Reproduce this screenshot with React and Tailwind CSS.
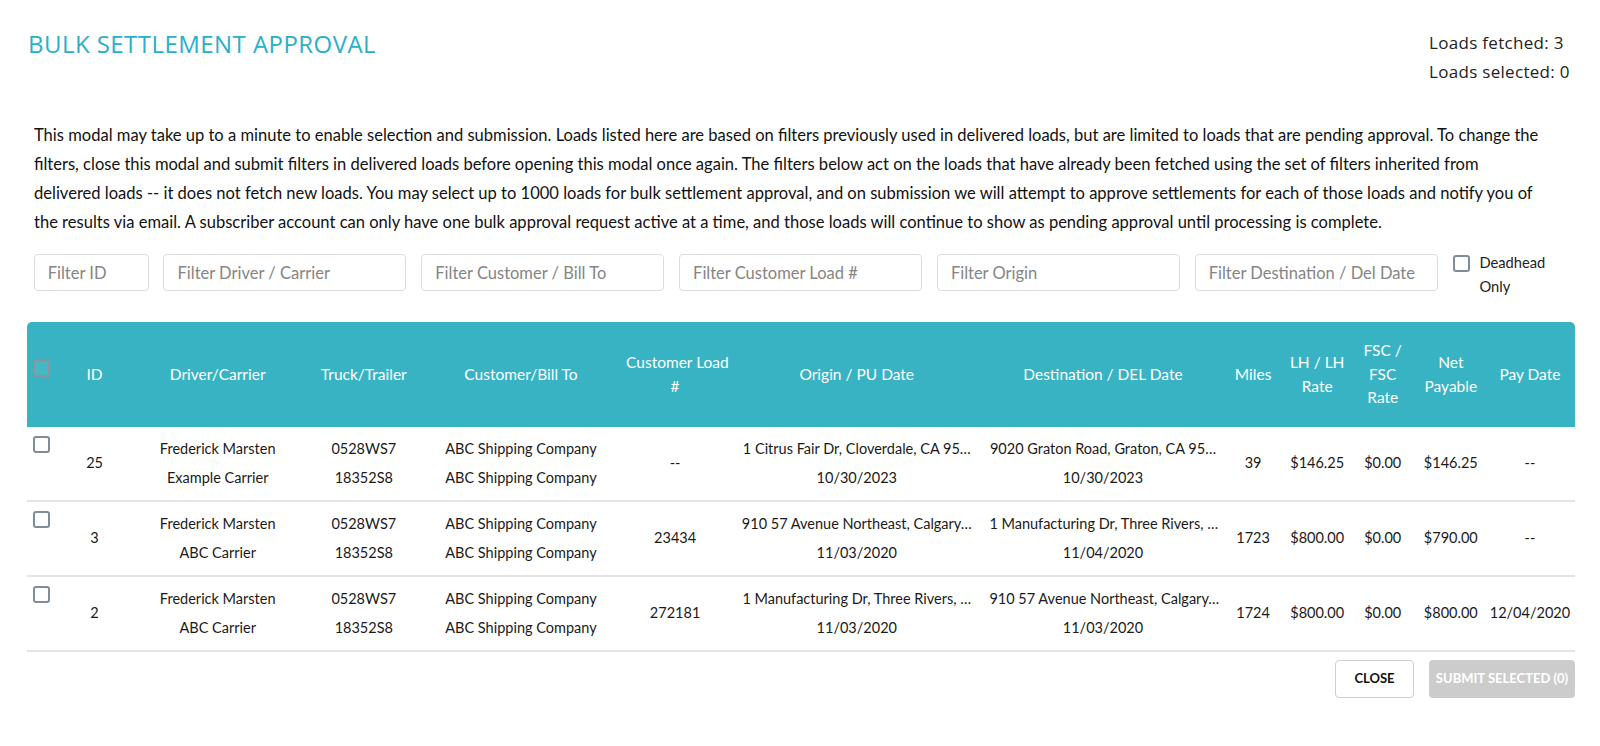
import React from "react";

const rows = [
  {
    id: "25",
    driver: ["Frederick Marsten", "Example Carrier"],
    truck: ["0528WS7", "18352S8"],
    cust: ["ABC Shipping Company", "ABC Shipping Company"],
    load: "--",
    origin: ["1 Citrus Fair Dr, Cloverdale, CA 95…", "10/30/2023"],
    dest: ["9020 Graton Road, Graton, CA 95…", "10/30/2023"],
    miles: "39",
    lh: "$146.25",
    fsc: "$0.00",
    net: "$146.25",
    pay: "--",
  },
  {
    id: "3",
    driver: ["Frederick Marsten", "ABC Carrier"],
    truck: ["0528WS7", "18352S8"],
    cust: ["ABC Shipping Company", "ABC Shipping Company"],
    load: "23434",
    origin: ["910 57 Avenue Northeast, Calgary…", "11/03/2020"],
    dest: ["1 Manufacturing Dr, Three Rivers, …", "11/04/2020"],
    miles: "1723",
    lh: "$800.00",
    fsc: "$0.00",
    net: "$790.00",
    pay: "--",
  },
  {
    id: "2",
    driver: ["Frederick Marsten", "ABC Carrier"],
    truck: ["0528WS7", "18352S8"],
    cust: ["ABC Shipping Company", "ABC Shipping Company"],
    load: "272181",
    origin: ["1 Manufacturing Dr, Three Rivers, …", "11/03/2020"],
    dest: ["910 57 Avenue Northeast, Calgary…", "11/03/2020"],
    miles: "1724",
    lh: "$800.00",
    fsc: "$0.00",
    net: "$800.00",
    pay: "12/04/2020",
  },
];

function Box({ header }) {
  return (
    <span
      className={
        header
          ? "block w-[17px] h-[17px] rounded-[3px] border-2 border-[#8a969b] bg-[#45b8c6] mb-[13px]"
          : "block w-[17px] h-[17px] rounded-[3px] border-2 border-[#7d8e9a] bg-white"
      }
    />
  );
}

function Two({ lines }) {
  return (
    <div className="whitespace-nowrap">
      <div>{lines[0]}</div>
      <div>{lines[1]}</div>
    </div>
  );
}

export default function App() {
  const th = "font-normal text-center align-middle px-1";
  const td = "text-center align-middle px-1 py-[8px] whitespace-nowrap";
  return (
    <div
      className="w-full min-h-[746px] bg-white pl-[27px] pr-[25px] text-[#222]"
      style={{ fontFamily: "Lato, 'Open Sans', sans-serif" }}
    >
      <div className="flex justify-between items-start pt-[29px]">
        <h1
          className="ml-[1px] text-[24px] leading-[29px] font-normal text-[#2aafc8] tracking-[0.45px]"
          style={{ fontFamily: "'Open Sans', 'Noto Sans', sans-serif" }}
        >
          BULK SETTLEMENT APPROVAL
        </h1>
        <div
          className="w-[146px] text-[17px] leading-[28.5px] text-[#222] tracking-[0.3px]"
          style={{ fontFamily: "'Open Sans', 'Noto Sans', sans-serif" }}
        >
          <div>Loads fetched: 3</div>
          <div>Loads selected: 0</div>
        </div>
      </div>

      <p className="mt-[35px] pl-[7px] text-[16.55px] leading-[29px] text-[#111]">
        This modal may take up to a minute to enable selection and submission. Loads listed here are
        based on filters previously used in delivered loads, but are limited to loads that are pending
        approval. To change the
        <br />
        filters, close this modal and submit filters in delivered loads before opening this modal once
        again. The filters below act on the loads that have already been fetched using the set of
        filters inherited from
        <br />
        delivered loads -- it does not fetch new loads. You may select up to 1000 loads for bulk
        settlement approval, and on submission we will attempt to approve settlements for each of those
        loads and notify you of
        <br />
        the results via email. A subscriber account can only have one bulk approval request active at a
        time, and those loads will continue to show as pending approval until processing is complete.
      </p>

      <div className="mt-[17px] h-[37px] pl-[6.7px] flex items-start gap-[14.8px]">
        {[
          ["Filter ID", "w-[115px]"],
          ["Filter Driver / Carrier", "w-[243px]"],
          ["Filter Customer / Bill To", "w-[243px]"],
          ["Filter Customer Load #", "w-[243px]"],
          ["Filter Origin", "w-[243px]"],
          ["Filter Destination / Del Date", "w-[243px]"],
        ].map(([p, w]) => (
          <input
            key={p}
            placeholder={p}
            className={`${w} h-[37px] shrink-0 rounded-[4px] border border-[#dcdcdc] bg-white px-[13px] text-[16.5px] text-[#222] placeholder:text-[#858585] outline-none`}
          />
        ))}
        <div className="ml-[1px] flex items-start gap-[9px]">
          <span className="mt-[1px] block w-[17px] h-[17px] rounded-[3px] border-2 border-[#7d8e9a] bg-white" />
          <div className="text-[14.7px] leading-[24px] -mt-[4px] text-[#222]">
            <div>Deadhead</div>
            <div>Only</div>
          </div>
        </div>
      </div>

      <table className="mt-[31px] w-full table-fixed border-collapse text-[14.5px]">
        <colgroup>
          <col className="w-[34.5px]" />
          <col className="w-[66px]" />
          <col className="w-[180px]" />
          <col className="w-[112px]" />
          <col className="w-[202px]" />
          <col className="w-[106px]" />
          <col className="w-[257px]" />
          <col className="w-[235px]" />
          <col className="w-[65px]" />
          <col className="w-[63px]" />
          <col className="w-[68px]" />
          <col className="w-[68px]" />
          <col className="w-[90px]" />
        </colgroup>
        <thead>
          <tr className="h-[105px] bg-[#37b3c4] text-white text-[15.5px] leading-[23.5px]">
            <th className="align-middle pl-[6px] rounded-tl-[5px]">
              <Box header />
            </th>
            <th className={th}>ID</th>
            <th className={th}>Driver/Carrier</th>
            <th className={th}>Truck/Trailer</th>
            <th className={th}>Customer/Bill To</th>
            <th className={`${th} whitespace-nowrap`}>
              Customer Load
              <br />#
            </th>
            <th className={th}>Origin / PU Date</th>
            <th className={th}>Destination / DEL Date</th>
            <th className={th}>Miles</th>
            <th className={`${th} whitespace-nowrap`}>
              LH / LH
              <br />
              Rate
            </th>
            <th className={th}>
              FSC /
              <br />
              FSC
              <br />
              Rate
            </th>
            <th className={th}>
              Net
              <br />
              Payable
            </th>
            <th className={`${th} whitespace-nowrap rounded-tr-[5px]`}>Pay Date</th>
          </tr>
        </thead>
        <tbody className="leading-[28.5px] text-[#1a1a1a]">
          {rows.map((r) => (
            <tr key={r.id} className="border-b-2 border-[#e4e4e4]">
              <td className="align-top pl-[6px] pt-[9px] pb-[8px]">
                <Box />
              </td>
              <td className={td}>{r.id}</td>
              <td className={td}>
                <Two lines={r.driver} />
              </td>
              <td className={td}>
                <Two lines={r.truck} />
              </td>
              <td className={td}>
                <Two lines={r.cust} />
              </td>
              <td className={td}>{r.load}</td>
              <td className={td}>
                <Two lines={r.origin} />
              </td>
              <td className={td}>
                <Two lines={r.dest} />
              </td>
              <td className={td}>{r.miles}</td>
              <td className={td}>{r.lh}</td>
              <td className={td}>{r.fsc}</td>
              <td className={td}>{r.net}</td>
              <td className={td}>{r.pay}</td>
            </tr>
          ))}
        </tbody>
      </table>

      <div className="mt-[8px] flex justify-end gap-[15px]">
        <button className="w-[79px] h-[38px] rounded-[4px] border border-[#cfcfcf] bg-white text-[13px] font-bold text-[#111]">
          CLOSE
        </button>
        <button className="w-[146px] h-[38px] rounded-[4px] bg-[#cccccc] text-[13px] font-bold text-white whitespace-nowrap">
          SUBMIT SELECTED (0)
        </button>
      </div>
    </div>
  );
}
